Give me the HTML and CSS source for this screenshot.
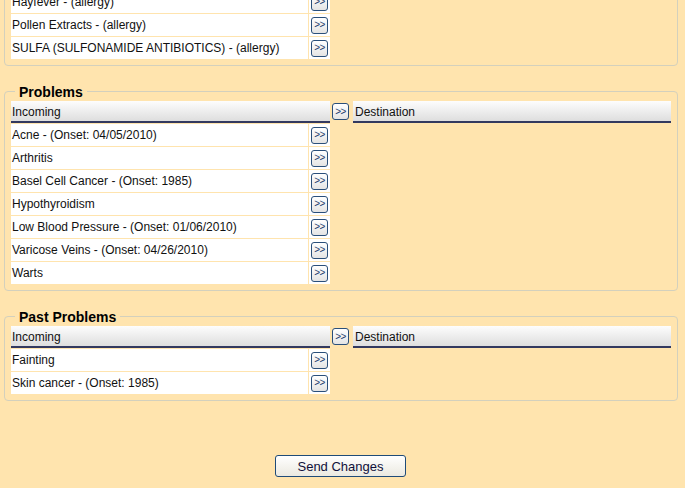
FILE: index.html
```html
<!DOCTYPE html>
<html lang="en">
<head>
<meta charset="utf-8">
<title>Reconcile</title>
<link rel="stylesheet" href="styles.css">
</head>
<body>
<div class="page">
  <fieldset class="group">
    <legend class="group-title">Allergies</legend>
    <div class="transfer">
      <div class="col">
        <div class="colhead">Incoming</div>
        <ul class="items">
          <li class="item"><span class="label">Hayfever - (allergy)</span><span class="act"><button class="mv">&gt;&gt;</button></span></li>
          <li class="item"><span class="label">Pollen Extracts - (allergy)</span><span class="act"><button class="mv">&gt;&gt;</button></span></li>
          <li class="item"><span class="label">SULFA (SULFONAMIDE ANTIBIOTICS) - (allergy)</span><span class="act"><button class="mv">&gt;&gt;</button></span></li>
        </ul>
      </div>
      <div class="mid"><button class="mv">&gt;&gt;</button></div>
      <div class="col"><div class="colhead dest">Destination</div></div>
    </div>
  </fieldset>

  <fieldset class="group">
    <legend class="group-title">Problems</legend>
    <div class="transfer">
      <div class="col">
        <div class="colhead">Incoming</div>
        <ul class="items">
          <li class="item"><span class="label">Acne - (Onset: 04/05/2010)</span><span class="act"><button class="mv">&gt;&gt;</button></span></li>
          <li class="item"><span class="label">Arthritis</span><span class="act"><button class="mv">&gt;&gt;</button></span></li>
          <li class="item"><span class="label">Basel Cell Cancer - (Onset: 1985)</span><span class="act"><button class="mv">&gt;&gt;</button></span></li>
          <li class="item"><span class="label">Hypothyroidism</span><span class="act"><button class="mv">&gt;&gt;</button></span></li>
          <li class="item"><span class="label">Low Blood Pressure - (Onset: 01/06/2010)</span><span class="act"><button class="mv">&gt;&gt;</button></span></li>
          <li class="item"><span class="label">Varicose Veins - (Onset: 04/26/2010)</span><span class="act"><button class="mv">&gt;&gt;</button></span></li>
          <li class="item"><span class="label">Warts</span><span class="act"><button class="mv">&gt;&gt;</button></span></li>
        </ul>
      </div>
      <div class="mid"><button class="mv">&gt;&gt;</button></div>
      <div class="col"><div class="colhead dest">Destination</div></div>
    </div>
  </fieldset>

  <fieldset class="group">
    <legend class="group-title">Past Problems</legend>
    <div class="transfer">
      <div class="col">
        <div class="colhead">Incoming</div>
        <ul class="items">
          <li class="item"><span class="label">Fainting</span><span class="act"><button class="mv">&gt;&gt;</button></span></li>
          <li class="item"><span class="label">Skin cancer - (Onset: 1985)</span><span class="act"><button class="mv">&gt;&gt;</button></span></li>
        </ul>
      </div>
      <div class="mid"><button class="mv">&gt;&gt;</button></div>
      <div class="col"><div class="colhead dest">Destination</div></div>
    </div>
  </fieldset>

  <div class="actions"><button class="send">Send Changes</button></div>
</div>
</body>
</html>
```

FILE: styles.css
```css
html, body {
  margin: 0;
  padding: 0;
  background: #ffe4ae;
  font-family: "Liberation Sans", Arial, sans-serif;
  font-size: 12px;
  color: #111;
  overflow: hidden;
}

.page {
  margin-top: -51px;
  padding-bottom: 20px;
}

.group {
  width: 660px;
  margin: 0 0 16px 4px;
  padding: 1px 6px 6px 6px;
  border: 1px solid #d3d0bd;
  border-radius: 4px;
}

.group-title {
  margin-left: 4px;
  padding: 2px 4px 0 4px;
  font-size: 14px;
  font-weight: bold;
  line-height: 16px;
  color: #000;
}

.transfer {
  display: grid;
  grid-template-columns: 319px 23px 318px;
  align-items: start;
}

.colhead {
  height: 19px;
  padding-top: 1px;
  line-height: 20px;
  padding-left: 1px;
  border-bottom: 2px solid #33395f;
  background: linear-gradient(#fdfdfd, #dedede);
  color: #111;
}

.colhead.dest {
  padding-left: 2px;
}

.items {
  list-style: none;
  margin: 0;
  padding: 0;
}

.item {
  display: grid;
  grid-template-columns: 297px 21px;
  column-gap: 1px;
  margin-top: 1px;
  height: 22px;
}

.label {
  background: #fff;
  line-height: 22px;
  padding-left: 1px;
  white-space: nowrap;
}

.act {
  background: #fff;
  display: flex;
  align-items: center;
  padding-left: 2px;
}

.mid {
  padding: 2px 0 0 2px;
}

.mv {
  width: 17px;
  height: 17px;
  padding: 0;
  margin: 0;
  border: 1px solid #2a4f7a;
  border-radius: 3px;
  background: linear-gradient(#ffffff, #e4e4e4);
  font-family: "Liberation Sans", Arial, sans-serif;
  font-size: 10px;
  line-height: 14px;
  color: #1d3c6e;
  letter-spacing: -0.5px;
  text-align: center;
}

.actions {
  display: flex;
  justify-content: center;
  padding-top: 38px;
  padding-right: 4px;
}

.send {
  width: 131px;
  height: 22px;
  padding: 0;
  border: 1px solid #1f4b78;
  border-radius: 3px;
  background: linear-gradient(#ffffff, #ebe9e0);
  font-family: "Liberation Sans", Arial, sans-serif;
  font-size: 13px;
  color: #10103a;
}
```
